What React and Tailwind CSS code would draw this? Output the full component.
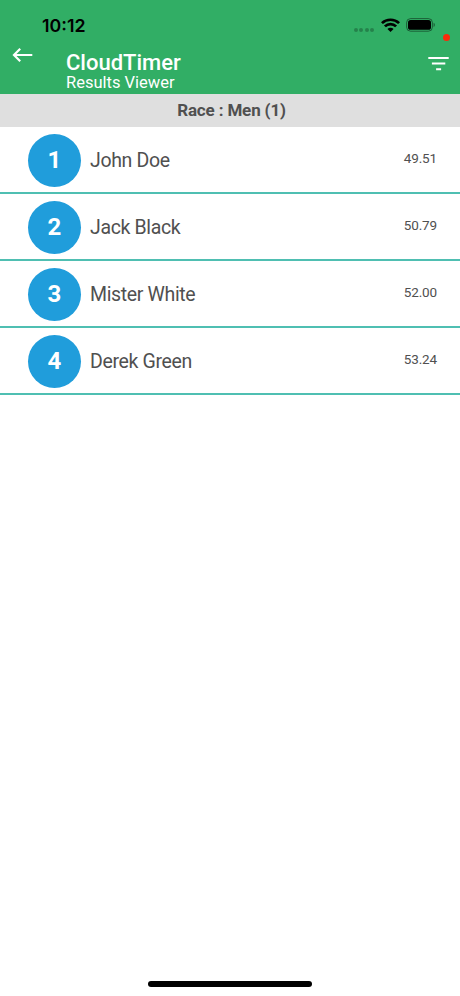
const RESULTS = [
  { place: 1, name: "John Doe", time: "49.51" },
  { place: 2, name: "Jack Black", time: "50.79" },
  { place: 3, name: "Mister White", time: "52.00" },
  { place: 4, name: "Derek Green", time: "53.24" },
];

const WifiIcon = () => (
  <svg className="w-[19px] h-[14px]" viewBox="0 0 18 14" fill="none" stroke="#000" strokeWidth="2.6" preserveAspectRatio="none">
    <path d="M0.9 5.1a11.5 11.5 0 0 1 16.2 0" />
    <path d="M3.7 8.4a7.4 7.4 0 0 1 10.6 0" />
    <path d="M6.1 11a4 4 0 0 1 5.8 0L9 14z" fill="#000" stroke="none" />
  </svg>
);

const BatteryIcon = () => (
  <svg className="w-[30px] h-[14px]" viewBox="0 0 30 14">
    <rect x="0.6" y="0.6" width="25.8" height="12.6" rx="4" fill="none" stroke="#000" strokeOpacity="0.45" />
    <rect x="2" y="2" width="23" height="9.8" rx="2.6" fill="#000" />
    <path d="M27.6 4.8c1.6.6 1.6 3.6 0 4.2z" fill="#000" fillOpacity="0.5" />
  </svg>
);

const StatusBar = () => (
  <div className="relative h-[46px] flex items-start justify-between pl-[42px] pr-[24px]">
    <span className="mt-[14px] font-['Inter',sans-serif] text-[17.8px] leading-6 font-semibold text-black">10:12</span>
    <div className="mt-[18px] flex items-start">
      <div className="mt-[10px] mr-[7px] flex gap-[1.5px]">
        {[0, 1, 2, 3].map(i => <span key={i} className="w-[4px] h-[4px] rounded-full bg-black/25" />)}
      </div>
      <WifiIcon />
      <div className="ml-[6px]"><BatteryIcon /></div>
    </div>
    <span className="absolute top-[34px] left-[443px] w-[7px] h-[7px] rounded-full bg-[#fa2b0b]" />
  </div>
);

const AppBar = () => (
  <div className="h-12 flex items-start text-white">
    <button className="mt-[1px] ml-[12px] mr-[33px]" aria-label="Back">
      <svg className="block w-[21px] h-4" viewBox="0 0 21 16" fill="none" stroke="currentColor" strokeWidth="2.2">
        <path d="M20.3 8H2.2M8.2 1.8L2 8l6.2 6.2" />
      </svg>
    </button>
    <div className="flex-1 pt-[6px]">
      <h1 className="text-[22px] leading-[21px] font-medium">CloudTimer</h1>
      <p className="pt-px text-[16.5px] leading-[18px]">Results Viewer</p>
    </div>
    <button className="mt-[11px] mr-[11px]" aria-label="Filter">
      <svg className="block w-[21px] h-[14px]" viewBox="0 0 21 14" fill="currentColor">
        <path d="M0.3 0h20.4v2H0.3zM3.9 5.6h13.4v2H3.9zM8.1 11.2h5v2h-5z" />
      </svg>
    </button>
  </div>
);

const ResultRow = ({ place, name, time }) => (
  <li className="h-[67px] flex items-start pl-7 pr-[23px] pt-[7px] border-b-2 border-[#4fbfb2] text-[#505050]">
    <div className="w-[53px] h-[53px] pb-px rounded-full bg-[#209ddb] flex items-center justify-center text-white text-2xl font-bold">
      {place}
    </div>
    <span className="ml-[9px] mt-[13px] flex-1 text-[19.5px] leading-[27px] tracking-[-0.35px]">{name}</span>
    <span className="mt-[15px] text-[13.5px] leading-[18px] tracking-[-0.15px]">{time}</span>
  </li>
);

const App = () => (
  <div className="w-full h-screen bg-white flex flex-col overflow-hidden font-['Roboto',sans-serif]">
    <header className="bg-[#31ae65]">
      <StatusBar />
      <AppBar />
    </header>

    <div className="h-[33px] pl-[3px] bg-[#dfdfdf] flex items-center justify-center">
      <h2 className="text-[17px] font-bold tracking-[-0.15px] text-[#505050]">Race : Men (1)</h2>
    </div>

    <ul className="flex-1">
      {RESULTS.map(r => <ResultRow key={r.place} {...r} />)}
    </ul>

    {/* Home indicator */}
    <div className="h-[15px] flex justify-center">
      <div className="w-[164px] h-[6px] rounded-full bg-black" />
    </div>
  </div>
);

export default App;
